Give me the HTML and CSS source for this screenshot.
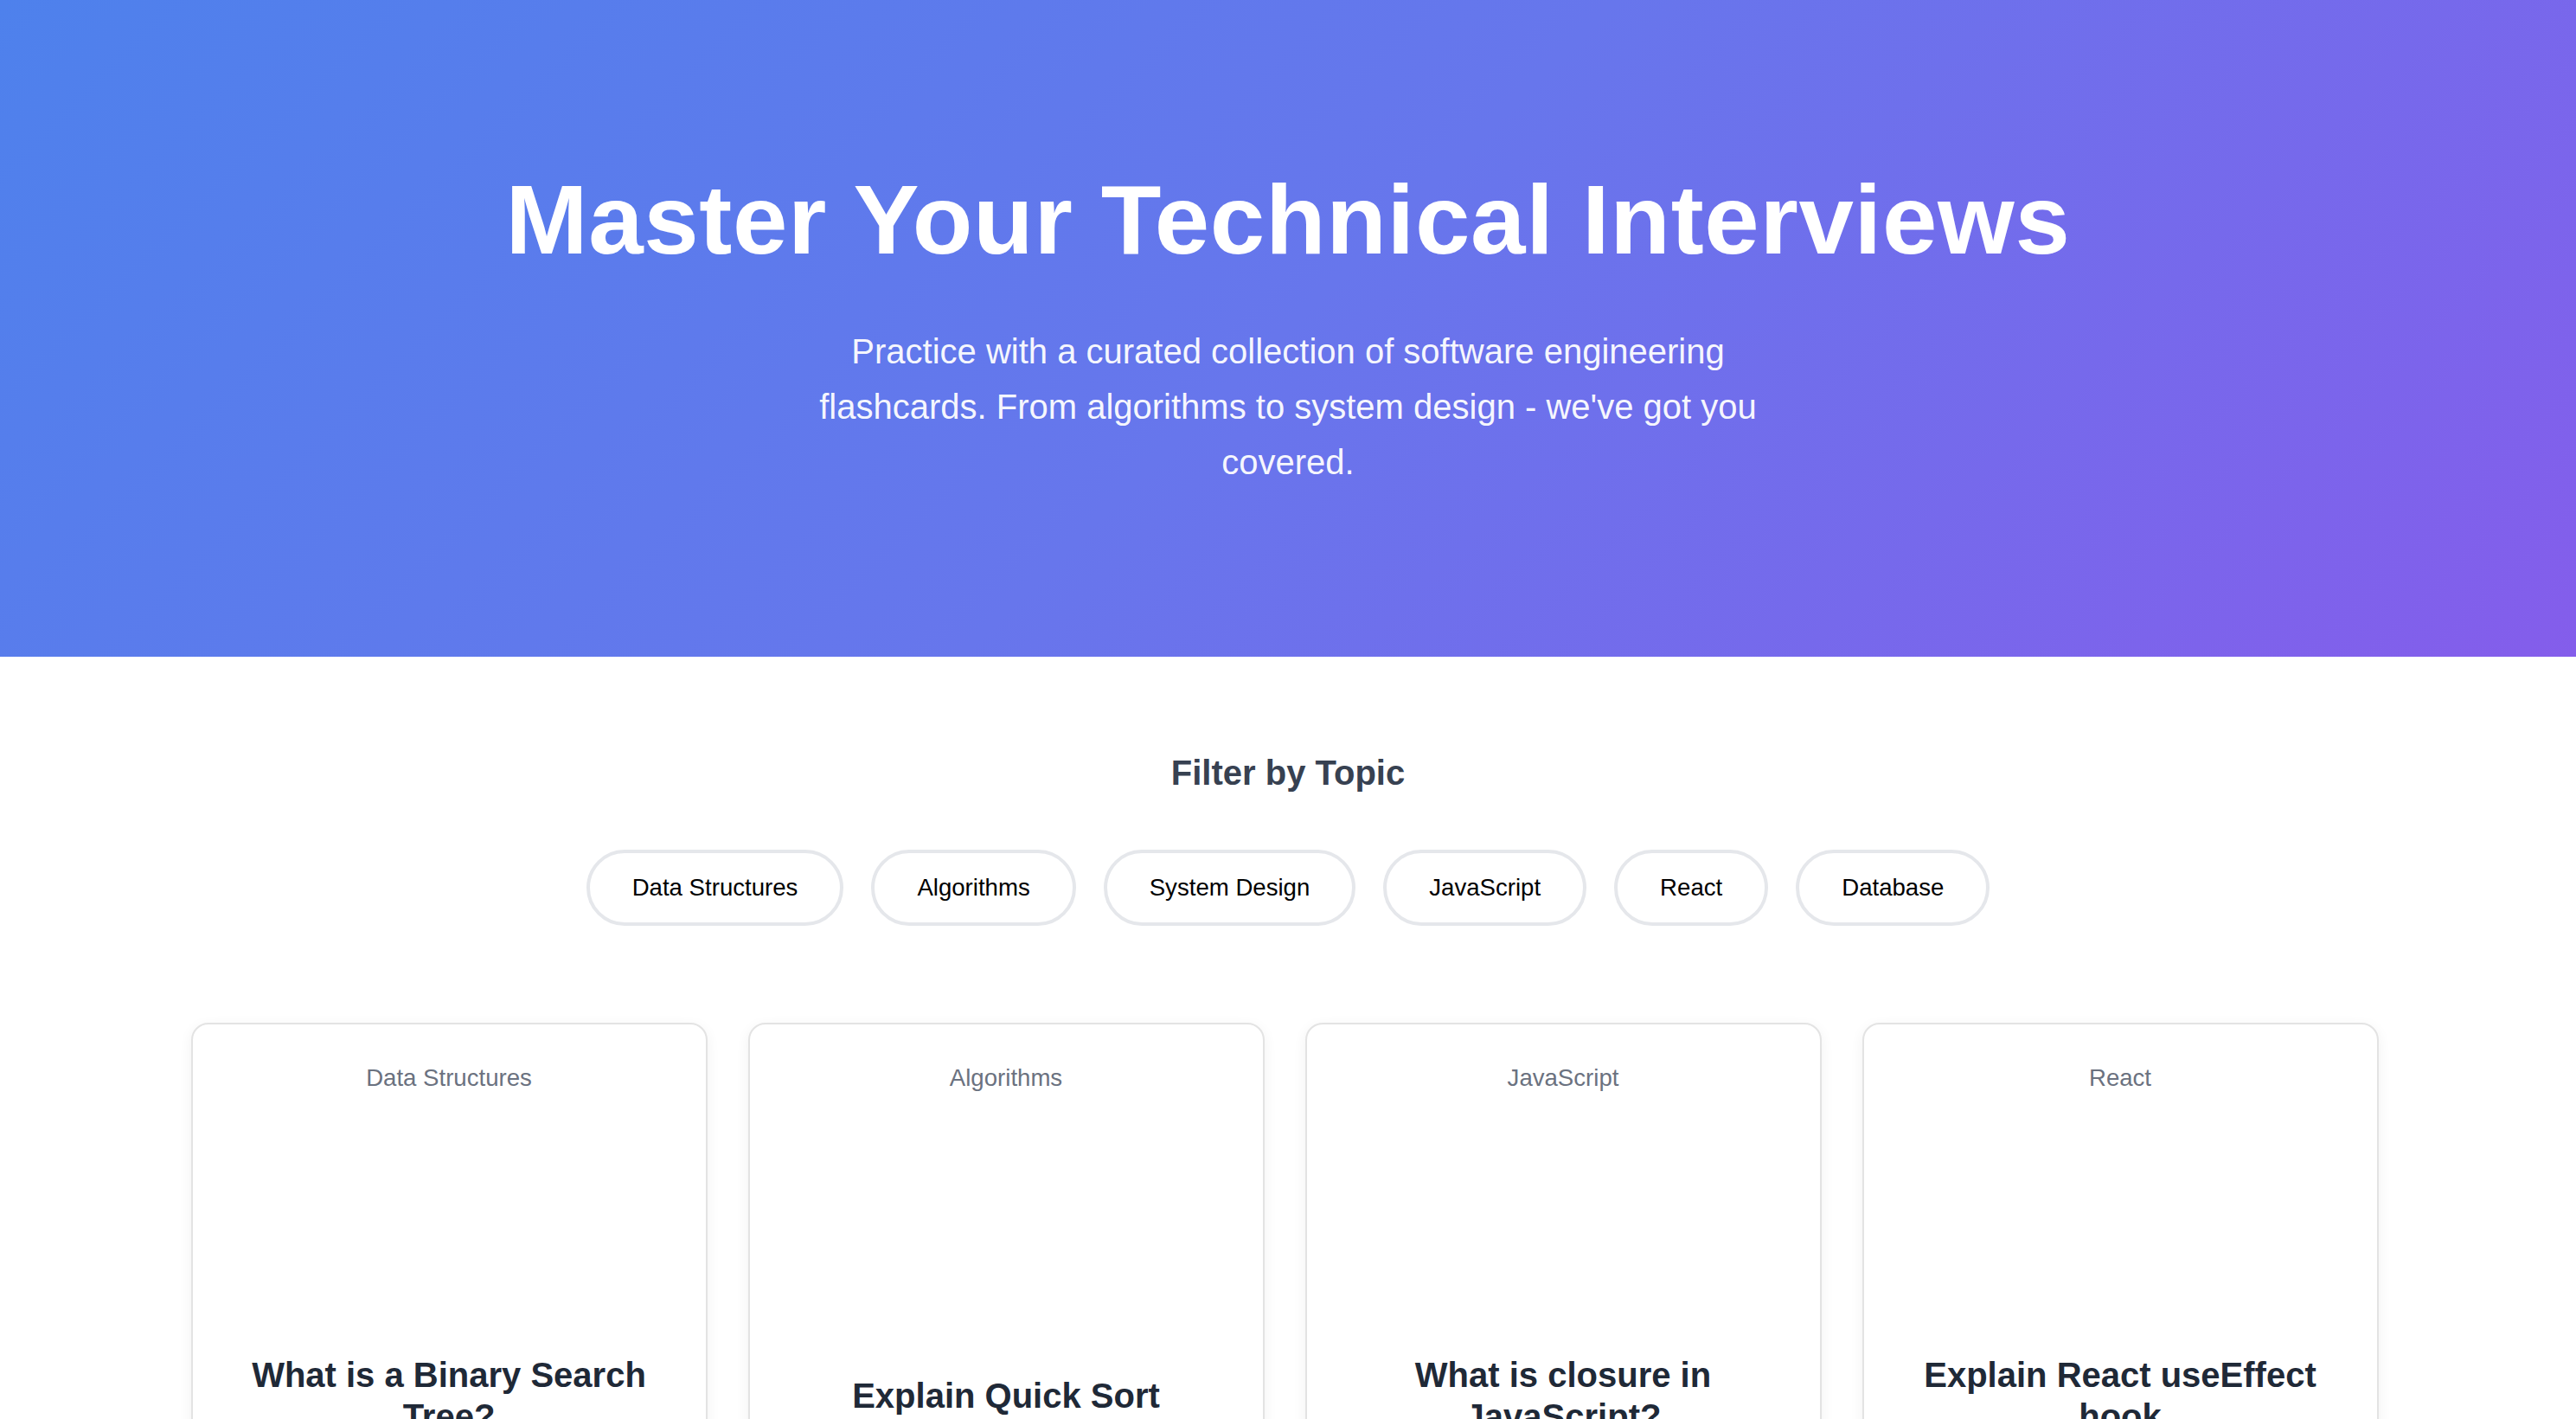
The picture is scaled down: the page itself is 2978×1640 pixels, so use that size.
FILE: index.html
```html
<!DOCTYPE html>
<html lang="en">
<head>
<meta charset="utf-8">
<title>Master Your Technical Interviews</title>
<link rel="stylesheet" href="styles.css">
</head>
<body>
<header class="hero">
  <h1 class="hero-title">Master Your Technical Interviews</h1>
  <p class="hero-text">Practice with a curated collection of software engineering flashcards. From algorithms to system design - we've got you covered.</p>
</header>
<main class="content">
  <section class="filter">
    <h2 class="filter-title">Filter by Topic</h2>
    <div class="pills">
      <button class="pill">Data Structures</button>
      <button class="pill">Algorithms</button>
      <button class="pill">System Design</button>
      <button class="pill">JavaScript</button>
      <button class="pill">React</button>
      <button class="pill">Database</button>
    </div>
  </section>
  <section class="cards">
    <article class="card">
      <div class="card-tag">Data Structures</div>
      <div class="card-body"><h3 class="card-question">What is a Binary Search Tree?</h3></div>
    </article>
    <article class="card">
      <div class="card-tag">Algorithms</div>
      <div class="card-body"><h3 class="card-question">Explain Quick Sort</h3></div>
    </article>
    <article class="card">
      <div class="card-tag">JavaScript</div>
      <div class="card-body"><h3 class="card-question">What is closure in JavaScript?</h3></div>
    </article>
    <article class="card">
      <div class="card-tag">React</div>
      <div class="card-body"><h3 class="card-question">Explain React useEffect hook</h3></div>
    </article>
  </section>
</main>
</body>
</html>
```
FILE: styles.css
```css
* { box-sizing: border-box; }

body {
  margin: 0;
  font-family: "Liberation Sans", Arial, Helvetica, sans-serif;
  background: #ffffff;
  color: #1f2937;
}

.hero {
  background: linear-gradient(135deg, #4e81ec 0%, #6776ec 50%, #845deb 100%);
  padding: 186px 40px 193px;
  text-align: center;
  color: #ffffff;
}

.hero-title {
  margin: 0 0 53px;
  font-size: 114px;
  line-height: 135px;
  font-weight: 700;
  letter-spacing: 0.7px;
}

.hero-text {
  margin: 0 auto;
  max-width: 1140px;
  font-size: 40px;
  line-height: 64px;
  color: rgba(255, 255, 255, 0.96);
}

.content {
  padding-top: 111px;
}

.filter {
  text-align: center;
}

.filter-title {
  margin: 0 0 66px;
  font-size: 40px;
  line-height: 46px;
  font-weight: 700;
  color: #374151;
}

.pills {
  display: flex;
  justify-content: center;
  gap: 32px;
}

.pill {
  font-family: "Liberation Sans", Arial, sans-serif;
  font-size: 27.6px;
  line-height: 32px;
  padding: 24px 49px;
  border: 4px solid #e5e7eb;
  border-radius: 999px;
  background: #ffffff;
  color: #000000;
}

.cards {
  display: grid;
  grid-template-columns: repeat(4, 597px);
  gap: 47px;
  width: 2537px;
  padding-right: 8px;
  margin: 112px auto 0;
}

.card {
  height: 866px;
  display: flex;
  flex-direction: column;
  padding: 46px 57px 48px;
  background: #ffffff;
  border: 2px solid #e3e3e3;
  border-radius: 20px;
  box-shadow: 0 4px 16px rgba(0, 0, 0, 0.06);
  text-align: center;
}

.card::after {
  content: "";
  height: 34px;
}

.card-tag {
  font-size: 27.6px;
  line-height: 32px;
  color: #6b7280;
}

.card-body {
  flex: 1;
  display: flex;
  align-items: center;
  justify-content: center;
}

.card-question {
  margin: 0;
  font-size: 40px;
  line-height: 48px;
  font-weight: 700;
  color: #1f2937;
}
```
